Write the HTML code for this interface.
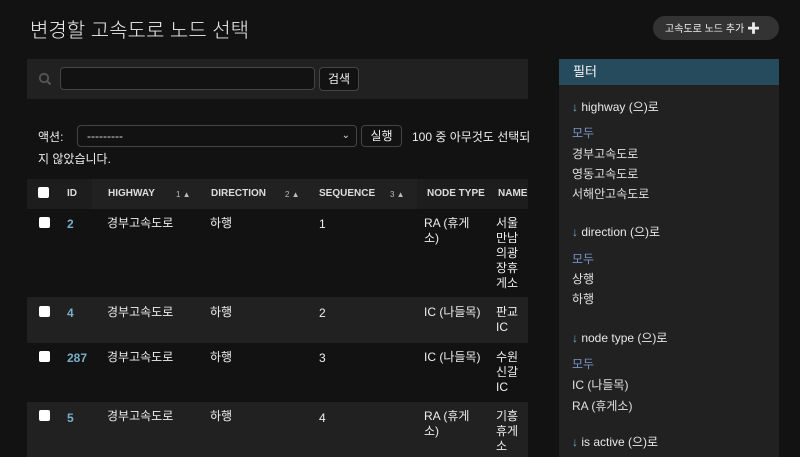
<!DOCTYPE html>
<html><head><meta charset="utf-8"><style>
*{margin:0;padding:0;box-sizing:border-box}
body{width:800px;height:457px;overflow:hidden;background:#121212;color:#eeeeee;font-family:"Liberation Sans","Noto Sans CJK KR",sans-serif;font-size:12px;position:relative}
.a{position:absolute;white-space:nowrap}
h1{position:absolute;left:30px;top:14px;font-size:20px;font-weight:300;color:#f0f0f0}
.addbtn{position:absolute;left:653px;top:16px;width:126px;height:24px;border-radius:12px;background:#333;color:#eee;font-size:10px;line-height:24px;padding-left:12px}
.srch{position:absolute;left:27px;top:59px;width:501px;height:40px;background:#212121}
.inp{position:absolute;border:1px solid #444;border-radius:4px;background:#121212}
.btn{position:absolute;border:1px solid #444;border-radius:4px;background:#121212;color:#eee;text-align:center;font-size:12px}
.thead{position:absolute;left:27px;top:179px;width:501px;height:30px;background:#212121}
.th{position:absolute;top:188px;font-size:10px;font-weight:bold;color:#ddd}
.so{position:absolute;top:190px;font-size:8px;color:#bbb}
.cb{position:absolute;width:11px;height:11px;background:#fff;border-radius:2px}
.row{position:absolute;left:27px;width:501px}
.td{position:absolute;line-height:15px}
.id{color:#79aec8;font-weight:bold}
.side{position:absolute;left:559px;top:59px;width:220px;height:398px;background:#212121}
.sh{position:absolute;left:559px;top:59px;width:220px;height:26px;background:#264b5d;color:#f5f5f5;font-size:13px;line-height:26px;padding-left:14px}
.f{position:absolute;left:572px;font-size:12px;color:#e0e0e0}
.fh{position:absolute;left:572px;font-size:12px;color:#e8e8e8}
.fh b{color:#79aec8;font-weight:normal}
.sel{color:#7a93c8}
</style></head><body>
<h1>변경할 고속도로 노드 선택</h1>
<div class="addbtn">고속도로 노드 추가 <span style="font-size:13px;position:relative;top:1px;font-weight:bold">✚</span></div>
<div class="srch"></div>
<svg class="a" style="left:38px;top:72px" width="14" height="14" viewBox="0 0 14 14"><circle cx="6" cy="6" r="4.2" stroke="#555" stroke-width="1.8" fill="none"/><line x1="9" y1="9" x2="12.5" y2="12.5" stroke="#555" stroke-width="2"/></svg>
<div class="inp" style="left:60px;top:67px;width:255px;height:23px"></div>
<div class="btn" style="left:319px;top:67px;width:40px;height:24px;line-height:22px">검색</div>
<div class="a" style="left:38px;top:128px">액션:</div>
<div class="inp" style="left:77px;top:125px;width:280px;height:22px;padding-left:9px;line-height:20px;color:#ddd">---------<span style="position:absolute;right:6px;top:0;font-size:10px">⌄</span></div>
<div class="btn" style="left:361px;top:125px;width:41px;height:22px;line-height:20px">실행</div>
<div class="a" style="left:412px;top:128px">100 중 아무것도 선택되</div>
<div class="a" style="left:38px;top:150px">지 않았습니다.</div>
<div class="thead"></div>
<div class="a" style="left:27px;top:179px;width:65px;height:30px;background:#1d1d1d"></div>
<div class="a" style="left:417px;top:179px;width:111px;height:30px;background:#1d1d1d"></div>
<div class="cb" style="left:38px;top:187px"></div>
<div class="th" style="left:67px">ID</div>
<div class="th" style="left:108px">HIGHWAY</div><div class="so" style="left:176px">1 ▲</div>
<div class="th" style="left:211px">DIRECTION</div><div class="so" style="left:285px">2 ▲</div>
<div class="th" style="left:319px">SEQUENCE</div><div class="so" style="left:390px">3 ▲</div>
<div class="th" style="left:427px">NODE TYPE</div>
<div class="th" style="left:498px">NAME</div>

<div class="row" style="top:209px;height:88px;background:#121212"></div>
<div class="row" style="top:297px;height:46px;background:#212121"></div>
<div class="row" style="top:343px;height:59px;background:#121212"></div>
<div class="row" style="top:402px;height:55px;background:#212121"></div>

<div class="cb" style="left:39px;top:217px"></div>
<div class="td id" style="left:67px;top:217px">2</div>
<div class="td" style="left:107px;top:216px">경부고속도로</div>
<div class="td" style="left:210px;top:216px">하행</div>
<div class="td" style="left:319px;top:217px">1</div>
<div class="td" style="left:424px;top:216px">RA (휴게<br>소)</div>
<div class="td" style="left:496px;top:216px">서울<br>만남<br>의광<br>장휴<br>게소</div>

<div class="cb" style="left:39px;top:306px"></div>
<div class="td id" style="left:67px;top:306px">4</div>
<div class="td" style="left:107px;top:305px">경부고속도로</div>
<div class="td" style="left:210px;top:305px">하행</div>
<div class="td" style="left:319px;top:306px">2</div>
<div class="td" style="left:424px;top:305px">IC (나들목)</div>
<div class="td" style="left:496px;top:305px">판교<br>IC</div>

<div class="cb" style="left:39px;top:351px"></div>
<div class="td id" style="left:67px;top:351px">287</div>
<div class="td" style="left:107px;top:350px">경부고속도로</div>
<div class="td" style="left:210px;top:350px">하행</div>
<div class="td" style="left:319px;top:351px">3</div>
<div class="td" style="left:424px;top:350px">IC (나들목)</div>
<div class="td" style="left:496px;top:350px">수원<br>신갈<br>IC</div>

<div class="cb" style="left:39px;top:410px"></div>
<div class="td id" style="left:67px;top:411px">5</div>
<div class="td" style="left:107px;top:409px">경부고속도로</div>
<div class="td" style="left:210px;top:409px">하행</div>
<div class="td" style="left:319px;top:411px">4</div>
<div class="td" style="left:424px;top:409px">RA (휴게<br>소)</div>
<div class="td" style="left:496px;top:409px">기흥<br>휴게<br>소</div>

<div class="side"></div>
<div class="sh">필터</div>
<div class="fh" style="top:98px"><b>↓</b> highway (으)로</div>
<div class="f sel" style="top:124px">모두</div>
<div class="f" style="top:145px">경부고속도로</div>
<div class="f" style="top:165px">영동고속도로</div>
<div class="f" style="top:185px">서해안고속도로</div>
<div class="fh" style="top:223px"><b>↓</b> direction (으)로</div>
<div class="f sel" style="top:250px">모두</div>
<div class="f" style="top:270px">상행</div>
<div class="f" style="top:290px">하행</div>
<div class="fh" style="top:329px"><b>↓</b> node type (으)로</div>
<div class="f sel" style="top:355px">모두</div>
<div class="f" style="top:376px">IC (나들목)</div>
<div class="f" style="top:397px">RA (휴게소)</div>
<div class="fh" style="top:433px"><b>↓</b> is active (으)로</div>
</body></html>
